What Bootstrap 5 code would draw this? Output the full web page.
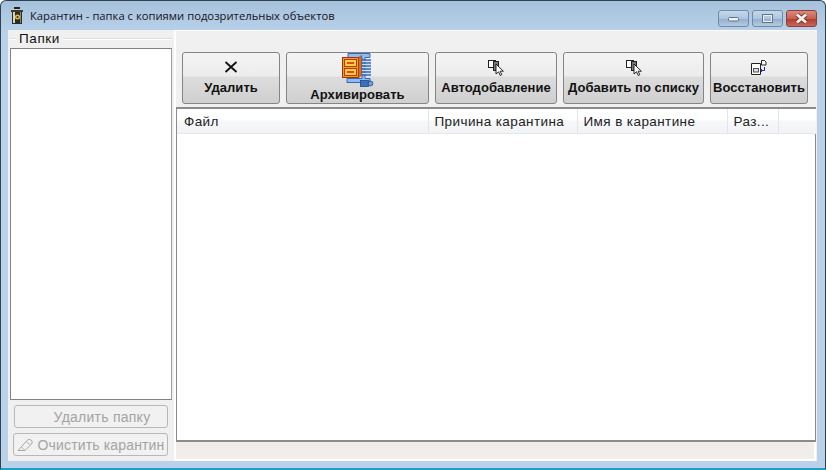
<!DOCTYPE html>
<html lang="ru">
<head>
    <meta charset="UTF-8">
    <meta name="viewport" content="width=device-width, initial-scale=1.0">
    <title>Карантин</title>
    <link href="https://cdn.jsdelivr.net/npm/bootstrap@5.3.0/dist/css/bootstrap.min.css" rel="stylesheet">
    <style>
        html, body { height: 100%; margin: 0; overflow: hidden; }
        body { background: #fff; font-family: "Liberation Sans", sans-serif; }
        .okno {
            width: 826px; height: 470px;
            background: linear-gradient(180deg, #a5c1db 0, #b9d2ea 32px, #b9d2ea 100%);
            border: 1px solid #2f4250;
            border-bottom: 2px solid #1f9fc4;
            border-radius: 6px 6px 0 0;
        }
        .zagolovok { height: 29px; padding: 6px 8px 0 9px; }
        .zagolovok-text { font: 11.25px "Open Sans", sans-serif; color: #1a1020; margin-left: 6px; padding-top: 1px; }
        .knopki-okna { gap: 3px; margin-left: auto; margin-top: 3px; height: 17px; }
        .knopka-okna {
            width: 31px; height: 17px; border: 1px solid #6f8aa5; border-radius: 3px;
            background: linear-gradient(180deg, #c5d8ea 0, #adc6de 50%, #90add0 51%, #b5cbe0 100%);
        }
        .knopka-zakryt { border-color: #8f3f3a; background: linear-gradient(180deg, #d98c80 0, #c8604f 50%, #b03a2c 51%, #c9675a 100%); }
        .rabochaya { height: 431px; margin: 0 8px 0 7px; background: #f0f0f0; }
        .levaya { width: 167px; border-right: 1px solid #fff; padding: 0 1px 3px 2px; }
        .gruppa { height: 18px; margin-right: 1px; }
        .gruppa-liniya { height: 1px; background: #dcdcdc; border-bottom: 1px solid #fff; box-sizing: content-box; }
        .gruppa-text { font: 13.5px/15px "Liberation Sans", sans-serif; padding: 0 3px 2px; color: #111; letter-spacing: .6px; }
        .papki { width: 162px; height: 352px; background: #fff; border: 1px solid #7f8389; border-right-color: #a0a0a0; }
        .seraya-knopka {
            height: 23px; background: #f1f1f1; border: 1px solid #b5b9b8; border-radius: 3px;
            font: 14px/20px "Liberation Sans", sans-serif; color: #a3a3a3; padding: 0;
        }
        .seraya-knopka:disabled { background: #f1f1f1; border-color: #b5b9b8; color: #a3a3a3; opacity: 1; }
        .knopka-papka { width: 154px; margin: 5px 0 0 4px; padding-left: 22px; letter-spacing: .25px; }
        .knopka-ochistit { width: 155px; margin: 5px 0 0 3px; letter-spacing: .15px; }
        .pravaya { width: 642px; border-left: 1px solid #fff; border-top: 1px solid #fff; }
        .paneli { height: 76px; padding: 21px 0 0 6px; gap: 6px; }
        .instrument {
            height: 52px; padding: 0; color: #111; border: 1px solid #858585; border-radius: 3px;
            background: linear-gradient(180deg, #f4f4f4 0, #ececec 23px, #dcdcdc 24px, #cfcfcf 100%);
            font: bold 13px/16px "Liberation Sans", sans-serif; white-space: nowrap; letter-spacing: .05px;
        }
        .instrument:hover { color: #111; border-color: #858585; }
        .spisok { width: 640px; height: 335px; background: #fff; border: 1px solid #8b8b8b; border-width: 2px 1px 2px 1px; }
        .spisok .table { margin: 0; table-layout: fixed; width: 639px; }
        .spisok th {
            height: 24px; padding: 2px 0 0 6px; font: 13.5px/22px "Liberation Sans", sans-serif; color: #222;
            letter-spacing: .4px; border-bottom: 1px solid #e6e7ea; border-right: 1px solid #e3e5e8;
            background: linear-gradient(180deg, #fff 0, #fff 45%, #f6f7f9 50%, #f2f3f5 100%);
            white-space: nowrap; overflow: hidden; box-shadow: none;
        }
        .spisok th:first-child { padding-left: 7px; }
        .spisok th:last-child { border-right: 0; }
        .stroka-sostoyaniya { height: 19px; width: 640px; background: #f0edeb; border-bottom: 2px solid #fff; border-right: 2px solid #fff; }
    </style>
</head>
<body>
    <div class="okno d-flex flex-column">
        <!-- Заголовок окна -->
        <div class="zagolovok d-flex align-items-start flex-shrink-0">
            <svg width="14" height="17" viewBox="0 0 14 17">
                <rect x="4" y="0" width="6" height="2" fill="#222"/>
                <rect x="1" y="2" width="12" height="3" fill="#3a3a38"/>
                <path d="M2 5h10v12H2z" fill="#2a2a28"/>
                <rect x="3" y="5" width="2" height="11" fill="#d8d4c0"/>
                <rect x="10" y="5" width="1" height="11" fill="#8a8a80"/>
                <circle cx="7.500" cy="10" r="2.500" fill="#e8c22e"/>
                <circle cx="7.500" cy="10" r="1" fill="#222"/>
                <rect x="1" y="2" width="12" height="1" fill="#c8c8c0"/>
            </svg>
            <div class="zagolovok-text">Карантин - папка с копиями подозрительных объектов</div>
            <div class="knopki-okna d-flex">
                <div class="knopka-okna d-flex align-items-center justify-content-center">
                    <svg width="11" height="6" viewBox="0 0 11 6"><rect x=".5" y="1.500" width="10" height="3.500" rx="1" fill="#eef2f6" stroke="#5f7488"/></svg>
                </div>
                <div class="knopka-okna d-flex align-items-center justify-content-center">
                    <svg width="11" height="9" viewBox="0 0 11 9"><rect x="1" y="1" width="9" height="7" fill="none" stroke="#e8eef4" stroke-width="2"/><rect x=".5" y=".5" width="10" height="8" fill="none" stroke="#5f7488"/></svg>
                </div>
                <div class="knopka-okna knopka-zakryt d-flex align-items-center justify-content-center">
                    <svg width="15" height="11" viewBox="0 0 15 11"><path d="M3 1.500l9 8M12 1.500l-9 8" stroke="#6d2a22" stroke-width="4.400"/><path d="M3 1.500l9 8M12 1.500l-9 8" stroke="#f4f0ee" stroke-width="3"/></svg>
                </div>
            </div>
        </div>

        <div class="rabochaya d-flex">
            <!-- Левая панель -->
            <div class="levaya d-flex flex-column flex-shrink-0">
                <div class="gruppa d-flex align-items-center">
                    <div class="gruppa-liniya" style="width:6px"></div>
                    <div class="gruppa-text">Папки</div>
                    <div class="gruppa-liniya flex-grow-1"></div>
                </div>
                <div class="papki"></div>
                <button class="btn seraya-knopka knopka-papka" disabled>Удалить папку</button>
                <button class="btn seraya-knopka knopka-ochistit d-flex align-items-center justify-content-center gap-1" disabled>
                    <svg width="17" height="14" viewBox="0 0 17 14"><path d="M1 12.500L10 2.500c1-1 2.500-1.500 4-.5s1.500 2.500 .5 4L8 12.500z" fill="none" stroke="#a8a8a8"/><path d="M4.500 9l3 3M9 3.500l4 3" stroke="#b8b8b8" fill="none"/></svg>
                    <span>Очистить карантин</span>
                </button>
            </div>

            <!-- Правая панель -->
            <div class="pravaya d-flex flex-column">
                <div class="paneli d-flex">
                    <button class="btn instrument d-flex flex-column align-items-center" style="width:98px">
                        <svg width="14" height="14" viewBox="0 0 14 14" style="margin-top:7px"><path d="M1.500 2l11 10M12.500 2l-11 10" stroke="#111" stroke-width="1.800"/></svg>
                        <span style="margin-top:6px">Удалить</span>
                    </button>
                    <button class="btn instrument d-flex flex-column align-items-center" style="width:143px">
                        <svg width="33" height="34" viewBox="0 0 33 34">
                            <path d="M7 .5h22v4H24v21h5v4H6v-4h15V4.500H7z" fill="#8fbcec" stroke="#2a5aa8" stroke-width=".9"/>
                            <path d="M21 7h9M21 10h9M21 13h9M21 16h9M21 19h9M21 22h9" stroke="#3668b8" stroke-width="1.400"/>
                            <path d="M21 8.500h9M21 11.500h9M21 14.500h9M21 17.500h9M21 20.500h9" stroke="#c8def6" stroke-width="1"/>
                            <rect x="1.500" y="4.500" width="16" height="20" fill="#e8a020" stroke="#a03018"/>
                            <rect x="3.500" y="6.500" width="12" height="7" fill="#f8d040" stroke="#c83018"/>
                            <rect x="3.500" y="15.500" width="12" height="7" fill="#f8d040" stroke="#c83018"/>
                            <rect x="6" y="9" width="7" height="2" fill="#e04a20"/>
                            <rect x="6" y="18" width="7" height="2" fill="#e04a20"/>
                            <path d="M17.500 4.500l3-2v20l-3 2z" fill="#c87818" stroke="#a03018" stroke-width=".6"/>
                            <rect x="19.500" y="27.500" width="8" height="6" fill="#3c70bc" stroke="#1f4a88" stroke-width=".8"/>
                            <circle cx="29.500" cy="30.500" r="2.400" fill="#6fa0dc" stroke="#1f4a88" stroke-width=".8"/>
                        </svg>
                        <span>Архивировать</span>
                    </button>
                    <button class="btn instrument d-flex flex-column align-items-center" style="width:122px">
                        <svg width="16" height="16" viewBox="0 0 16 16" style="margin-top:7px">
                            <rect x=".5" y=".5" width="7" height="7" fill="#fff" stroke="#222"/>
                            <rect x="5.500" y="1.500" width="5" height="9" fill="#777" stroke="#222"/>
                            <path d="M8 4v10l2.500-2.200 1.700 3.700 1.600-.8-1.700-3.500h3.300z" fill="#fff" stroke="#111" stroke-width=".9"/>
                        </svg>
                        <span style="margin-top:4px">Автодобавление</span>
                    </button>
                    <button class="btn instrument d-flex flex-column align-items-center" style="width:141px">
                        <svg width="16" height="16" viewBox="0 0 16 16" style="margin-top:7px">
                            <rect x=".5" y=".5" width="7" height="7" fill="#fff" stroke="#222"/>
                            <rect x="5.500" y="1.500" width="5" height="9" fill="#777" stroke="#222"/>
                            <path d="M8 4v10l2.500-2.200 1.700 3.700 1.600-.8-1.700-3.500h3.300z" fill="#fff" stroke="#111" stroke-width=".9"/>
                        </svg>
                        <span style="margin-top:4px">Добавить по списку</span>
                    </button>
                    <button class="btn instrument d-flex flex-column align-items-center" style="width:98px">
                        <svg width="16" height="16" viewBox="0 0 16 16" style="margin-top:7px">
                            <path d="M.5 3.500h9v11h-9z" fill="#fff" stroke="#222"/>
                            <rect x="2.500" y="8.500" width="5" height="3.500" fill="#ddd" stroke="#555"/>
                            <path d="M10.500 .5h3l1.500 1.500v3h-4.500z" fill="#fff" stroke="#222"/>
                            <path d="M13.500 7v3.500H9.500M11 9l-1.700 1.500L11 12" fill="none" stroke="#1a2a9a"/>
                        </svg>
                        <span style="margin-top:4px">Восстановить</span>
                    </button>
                </div>

                <!-- Список файлов -->
                <div class="spisok flex-shrink-0">
                    <table class="table">
                        <thead>
                            <tr>
                                <th style="width:251px">Файл</th>
                                <th style="width:149px">Причина карантина</th>
                                <th style="width:150px">Имя в карантине</th>
                                <th style="width:51px">Раз...</th>
                                <th></th>
                            </tr>
                        </thead>
                    </table>
                </div>
                <div class="stroka-sostoyaniya"></div>
            </div>
        </div>
    </div>

    <script src="https://cdn.jsdelivr.net/npm/bootstrap@5.3.0/dist/js/bootstrap.bundle.min.js"></script>
</body>
</html>
